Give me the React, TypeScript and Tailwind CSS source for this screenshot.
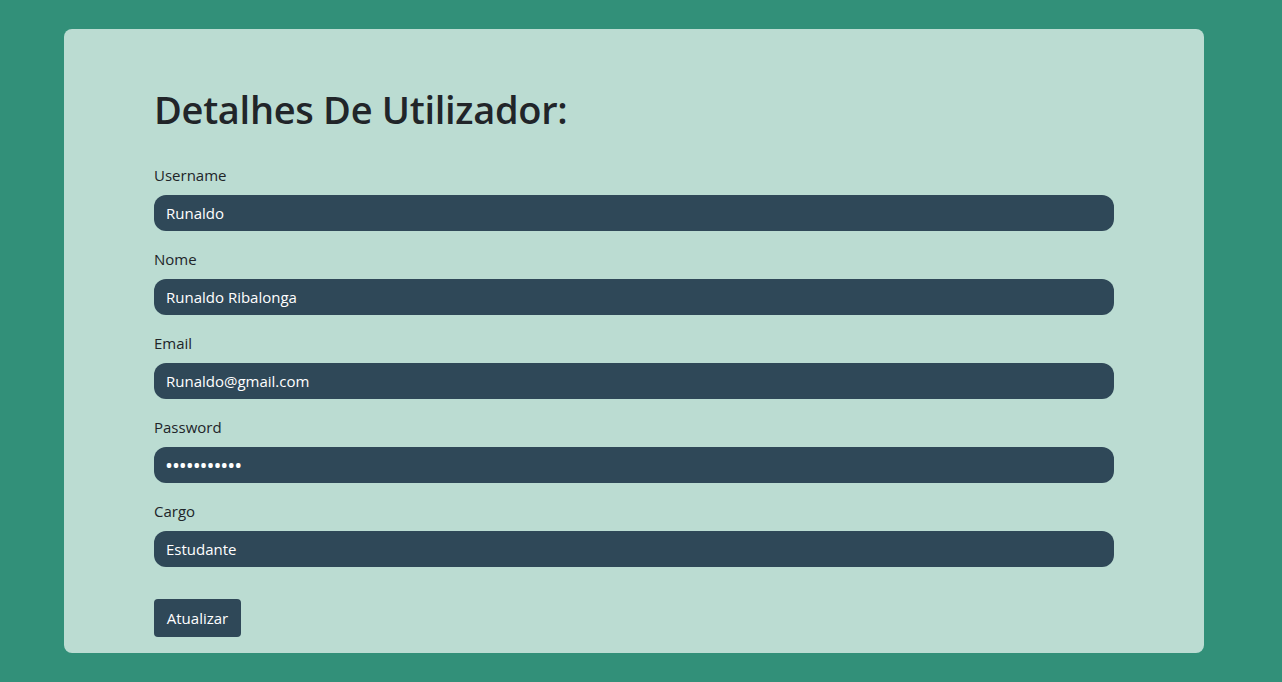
import React from "react";

const fields = [
  { label: "Username", value: "Runaldo" },
  { label: "Nome", value: "Runaldo Ribalonga" },
  { label: "Email", value: "Runaldo@gmail.com" },
  { label: "Password", value: "•••••••••••", dots: true },
  { label: "Cargo", value: "Estudante" },
];

export default function App() {
  return (
    <div
      className="min-h-[682px] w-full bg-[#329079] pt-[29px] pb-[29px]"
      style={{ fontFamily: '"Segoe UI", "Open Sans", sans-serif' }}
    >
      <div className="ml-[64px] w-[1140px] rounded-[8px] bg-[#bbdcd2] px-[90px] pt-[56px] pb-[16px]">
        <h1 className="text-[38px] leading-[48px] font-semibold text-[#212529] mb-[30px] tracking-[-0.3px]">
          Detalhes De Utilizador:
        </h1>
        {fields.map((f) => (
          <div key={f.label} className="mb-[16px]">
            <div className="text-[15px] leading-[24px] text-[#212529] mb-[8px]">{f.label}</div>
            <div
              className={
                f.dots
                  ? "h-[36px] rounded-[12px] bg-[#2f4858] px-[12px] flex items-center text-[16px] font-bold tracking-[0.9px] text-white"
                  : "h-[36px] rounded-[12px] bg-[#2f4858] px-[12px] flex items-center text-[15px] font-medium text-white"
              }
            >
              {f.value}
            </div>
          </div>
        ))}
        <button className="mt-[16px] h-[38px] w-[87px] rounded-[4px] bg-[#2f4858] text-white text-[15px] font-medium">
          Atualizar
        </button>
      </div>
    </div>
  );
}
